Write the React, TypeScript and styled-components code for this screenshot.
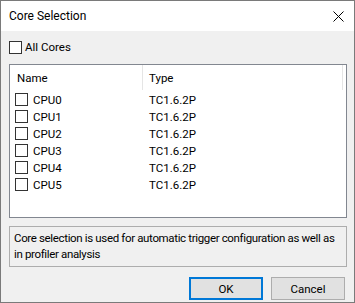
import React, { useState } from 'react';
import styled, { createGlobalStyle } from 'styled-components';

const GlobalStyle = createGlobalStyle`
  html, body {
    margin: 0;
    padding: 0;
    background: #ffffff;
  }
  * {
    box-sizing: border-box;
  }
`;

const Window = styled.div`
  width: 355px;
  height: 303px;
  border: 1px solid #7a7a7a;
  background: #f0f0f0;
  display: flex;
  flex-direction: column;
  font-family: Roboto, 'Noto Sans', sans-serif;
  font-size: 11.5px;
  color: #000;
`;

const TitleBar = styled.div`
  height: 30px;
  background: #ffffff;
  display: flex;
  align-items: center;
  justify-content: space-between;
  padding: 0 10px 0 8px;
  font-size: 12px;
`;

const CloseIcon = () => (
  <svg width="11" height="11" viewBox="0 0 11 11">
    <path d="M0.5 0.5 L10.5 10.5 M10.5 0.5 L0.5 10.5" stroke="#000" strokeWidth="1" />
  </svg>
);

const Body = styled.div`
  flex: 1;
  display: flex;
  flex-direction: column;
  padding: 10px 7px 0 8px;
`;

const CheckRow = styled.label`
  display: flex;
  align-items: center;
  gap: 3px;
  height: 13px;
  line-height: 13px;
  cursor: default;
`;

const Box = styled.span<{ checked: boolean }>`
  width: 13px;
  height: 13px;
  border: 1px solid #333333;
  background: #ffffff;
  display: inline-flex;
  align-items: center;
  justify-content: center;
  flex-shrink: 0;
`;

const Check = ({ checked, onClick }: { checked: boolean; onClick?: () => void }) => (
  <Box checked={checked} onClick={onClick}>
    {checked && (
      <svg width="9" height="9" viewBox="0 0 9 9">
        <path d="M1 4.5 L3.5 7 L8 1.5" stroke="#000" strokeWidth="1.3" fill="none" />
      </svg>
    )}
  </Box>
);

const List = styled.div`
  margin-top: 10px;
  height: 154px;
  border: 1px solid #828790;
  background: #ffffff;
  display: flex;
  flex-direction: column;
`;

const HeaderRow = styled.div`
  height: 25px;
  display: grid;
  grid-template-columns: 133px 200px;
  align-items: stretch;
`;

const HeaderCell = styled.div<{ last?: boolean }>`
  display: flex;
  align-items: center;
  padding-left: ${({ last }) => (last ? '6px' : '7px')};
  border-right: 1px solid #e5e5e5;
`;

const Rows = styled.div`
  padding-top: 1px;
`;

const Row = styled.div`
  height: 17px;
  display: grid;
  grid-template-columns: 133px 1fr;
  align-items: center;
`;

const NameCell = styled.div`
  display: flex;
  align-items: center;
  gap: 5px;
  padding-left: 5px;
`;

const TypeCell = styled.div`
  padding-left: 6px;
`;

const Info = styled.div`
  margin-top: 8px;
  height: 41px;
  border: 1px solid #adadad;
  padding: 3px 4px;
  line-height: 16px;
  letter-spacing: -0.35px;
`;

const Footer = styled.div`
  display: flex;
  justify-content: flex-end;
  gap: 8px;
  margin-top: 10px;
  padding-right: 2px;
`;

const Button = styled.button<{ primary?: boolean }>`
  width: 74px;
  height: 23px;
  font-family: inherit;
  font-size: 11.5px;
  color: #000;
  background: #e1e1e1;
  border: ${({ primary }) => (primary ? '2px solid #0078d7' : '1px solid #adadad')};
  padding: 0;
  cursor: default;
`;

const cores = ['CPU0', 'CPU1', 'CPU2', 'CPU3', 'CPU4', 'CPU5'];

export default function App() {
  const [checked, setChecked] = useState<boolean[]>(cores.map(() => false));
  const all = checked.every(Boolean);

  const toggle = (i: number) => setChecked(prev => prev.map((c, j) => (j === i ? !c : c)));

  return (
    <>
      <GlobalStyle />
      <Window>
        <TitleBar>
          <span>Core Selection</span>
          <CloseIcon />
        </TitleBar>
        <Body>
          <CheckRow>
            <Check checked={all} onClick={() => setChecked(cores.map(() => !all))} />
            All Cores
          </CheckRow>
          <List>
            <HeaderRow>
              <HeaderCell>Name</HeaderCell>
              <HeaderCell last>Type</HeaderCell>
            </HeaderRow>
            <Rows>
              {cores.map((c, i) => (
                <Row key={c}>
                  <NameCell>
                    <Check checked={checked[i]} onClick={() => toggle(i)} />
                    {c}
                  </NameCell>
                  <TypeCell>TC1.6.2P</TypeCell>
                </Row>
              ))}
            </Rows>
          </List>
          <Info>
            Core selection is used for automatic trigger configuration as well as in profiler analysis
          </Info>
          <Footer>
            <Button primary>OK</Button>
            <Button>Cancel</Button>
          </Footer>
        </Body>
      </Window>
    </>
  );
}
